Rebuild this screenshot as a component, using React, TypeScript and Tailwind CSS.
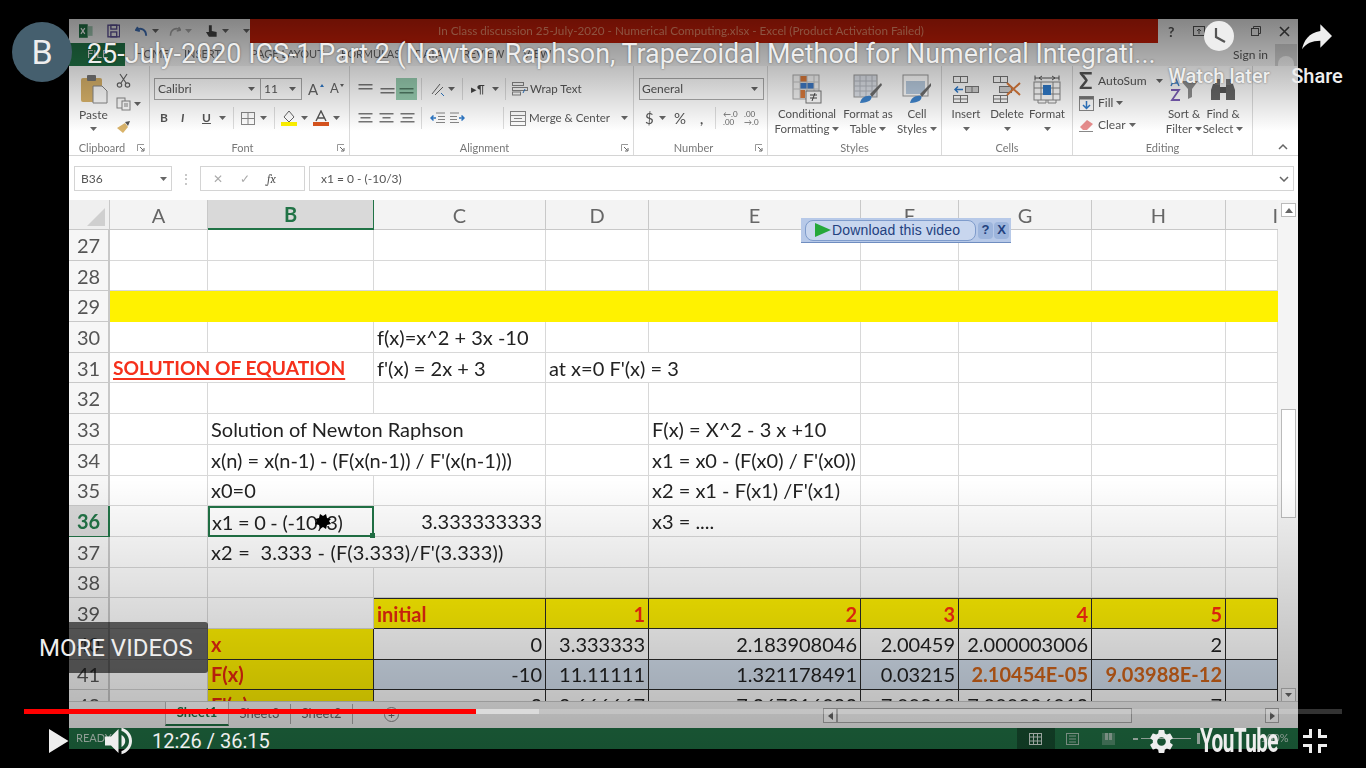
import React, { FC, ReactNode } from "react";
import { MdSettings } from "react-icons/md";

const excelFont = { fontFamily: "Lato, 'Open Sans', sans-serif" };

const Caret: FC<{ className?: string }> = ({ className = "" }) => (
  <svg width="7" height="4" viewBox="0 0 7 4" className={`shrink-0 ${className}`}>
    <path d="M0 0h7L3.5 4z" fill="#666" />
  </svg>
);

const Launcher = () => (
  <svg width="8" height="8" viewBox="0 0 8 8" className="shrink-0">
    <path d="M0.5 7V0.5H7" stroke="#999" fill="none" />
    <path d="M3 3l3.5 3.5M7 4v3H4" stroke="#666" fill="none" />
  </svg>
);

const Lines: FC<{ widths: number[]; color?: string }> = ({ widths, color = "#777" }) => (
  <svg width="15" height="12" viewBox="0 0 15 12" className="shrink-0">
    {widths.map((w, i) => (
      <rect key={i} x={(15 - w) / 2} y={i * 4 + 1} width={w} height="1.5" fill={color} />
    ))}
  </svg>
);

const Indent: FC<{ flip?: boolean }> = ({ flip }) => (
  <svg width="15" height="12" viewBox="0 0 15 12" className={`shrink-0 ${flip ? "-scale-x-100" : ""}`}>
    <path d="M6 1h9M8 4.500h7M8 7.500h7M6 10.500h9" stroke="#888" strokeWidth="1.200" />
    <path d="M6 6H1M3.500 3.500L1 6l2.500 2.500" stroke="#2f79c8" strokeWidth="1.500" fill="none" />
  </svg>
);

const Sep = () => <div className="w-px h-[22px] bg-[#dcdcdc] shrink-0" />;

const GroupLabel: FC<{ label: string; launcher?: boolean; pad?: string }> = ({ label, launcher, pad = "" }) => (
  <div className={`relative h-[18px] pt-[2px] flex items-center justify-center text-[11px] text-[#777] shrink-0 ${pad}`}>
    <span>{label}</span>
    {launcher && (
      <span className="absolute right-[4px] top-[6px]">
        <Launcher />
      </span>
    )}
  </div>
);

const Group: FC<{ w: string; label: string; launcher?: boolean; children: ReactNode; labelPad?: string }> = ({
  w,
  label,
  launcher,
  children,
  labelPad = "",
}) => (
  <div className={`${w} h-full flex flex-col border-r border-[#dadada] shrink-0`}>
    <div className="h-[72px] shrink-0 flex">{children}</div>
    <GroupLabel label={label} launcher={launcher} pad={labelPad} />
  </div>
);

const LargeBtn: FC<{ w: string; icon: ReactNode; lines: ReactNode[] }> = ({ w, icon, lines }) => (
  <div className={`${w} shrink-0 flex flex-col items-center pt-[8px]`}>
    <div className="h-[30px] flex items-center justify-center">{icon}</div>
    <div className="h-[2px]" />
    {lines.map((l, i) => (
      <div key={i} className="h-[15px] flex items-center gap-[3px] whitespace-nowrap text-[11.5px] leading-none text-[#555]">
        {l}
      </div>
    ))}
  </div>
);

const CondIcon = () => (
  <svg width="30" height="30" viewBox="0 0 30 30">
    <rect x="1" y="1" width="26" height="24" fill="#f4f4f4" stroke="#aaa" />
    <rect x="8" y="2" width="7" height="6" fill="#d9793a" />
    <rect x="8" y="9" width="14" height="6" fill="#3d78c4" />
    <rect x="8" y="16" width="5" height="8" fill="#d9793a" />
    <path d="M8 1v24M15 1v24M22 1v24M1 8h26M1 15h26" stroke="#c4c4c4" fill="none" />
    <rect x="14" y="17" width="15" height="12" fill="#fff" stroke="#777" />
    <path d="M18 21h7M18 24h7M23 19l-3 8" stroke="#444" fill="none" />
  </svg>
);

const TableIcon = () => (
  <svg width="30" height="30" viewBox="0 0 30 30">
    <rect x="1" y="1" width="23" height="22" fill="#dfe3ea" stroke="#999" />
    <path d="M1 7h23M1 12h23M1 17h23M7 1v22M13 1v22M19 1v22" stroke="#b4b8c0" fill="none" />
    <path d="M28 9L17 20l2 3 10-12z" fill="#6d6d6d" />
    <path d="M7 29c1-5 5-8 11-7 2 3-2 7-11 7z" fill="#3f84cc" />
  </svg>
);

const CellStyleIcon = () => (
  <svg width="30" height="30" viewBox="0 0 30 30">
    <rect x="1" y="1" width="25" height="21" fill="#fff" stroke="#999" />
    <rect x="4" y="7" width="19" height="13" fill="#b9cce0" />
    <path d="M29 9L18 20l2 3 9-11z" fill="#6d6d6d" />
    <path d="M8 29c1-5 5-8 11-7 2 3-2 7-11 7z" fill="#3f84cc" />
  </svg>
);

const InsertIcon = () => (
  <svg width="28" height="28" viewBox="0 0 28 28" fill="none" stroke="#777">
    <rect x="1.5" y="1.5" width="14" height="6" />
    <path d="M8.5 1.5v6" />
    <rect x="13.5" y="11.5" width="13" height="6" fill="#d0d0d0" />
    <path d="M20 11.5v6" />
    <path d="M11 14.5H3M6 11.5l-3 3 3 3" stroke="#2f79c8" strokeWidth="1.5" />
    <rect x="1.5" y="20.5" width="14" height="7" />
    <path d="M8.5 20.5v7M1.5 24h14" />
  </svg>
);

const DeleteIcon = () => (
  <svg width="30" height="28" viewBox="0 0 30 28" fill="none" stroke="#777">
    <rect x="1.5" y="1.5" width="14" height="6" />
    <path d="M8.5 1.5v6" />
    <rect x="7.5" y="11.5" width="12" height="6" fill="#d0d0d0" />
    <rect x="1.5" y="20.5" width="14" height="7" />
    <path d="M8.5 20.5v7M1.5 24h14" />
    <path d="M15 8l13 12M28 8L15 20" stroke="#d9793a" strokeWidth="2" />
  </svg>
);

const FormatIcon = () => (
  <svg width="30" height="30" viewBox="0 0 30 30" fill="none" stroke="#888">
    <path d="M3 4h24M3 1.5v5M27 1.5v5M10 2l-3 2 3 2M20 2l3 2-3 2" stroke="#555" />
    <rect x="2" y="8" width="26" height="18" />
    <path d="M9 8v18M21 8v18M2 14h26M2 20h26" />
    <rect x="11" y="11" width="8" height="10" fill="#2f79c8" stroke="none" />
    <path d="M6 26v3h8v-3M16 26v3h8v-3" stroke="#888" />
  </svg>
);

const SortIcon = () => (
  <svg width="30" height="26" viewBox="0 0 30 26">
    <path d="M2 10L6 1l4 9M3.5 7h5" fill="none" stroke="#3f84cc" strokeWidth="1.5" />
    <path d="M2 14h8L3 24h8" fill="none" stroke="#7a5cb5" strokeWidth="1.8" />
    <path d="M12 5h17l-6 8v8l-4 2V13z" fill="#8f8f8f" />
  </svg>
);

const BinocularIcon = () => (
  <svg width="26" height="26" viewBox="0 0 26 26">
    <path d="M3 8h7v16H1V14zM16 8h7l2 6v10h-9z" fill="#666" />
    <rect x="10" y="11" width="6" height="6" fill="#555" />
    <rect x="5" y="3" width="5" height="6" fill="#777" />
    <rect x="16" y="3" width="5" height="6" fill="#777" />
  </svg>
);

const PasteIcon = () => (
  <svg width="28" height="30" viewBox="0 0 28 30">
    <rect x="1" y="4" width="21" height="24" rx="2" fill="#d9b36a" />
    <rect x="7" y="1" width="9" height="6" rx="1" fill="#777" />
    <path d="M13 12h9l5 5v12H13z" fill="#fff" stroke="#888" />
  </svg>
);

const Ribbon = () => (
  <div className="h-[90px] bg-white flex border-b border-[#d4d4d4] shrink-0">
    <Group w="w-[81px]" label="Clipboard" launcher labelPad="pr-[14px]">
      <div className="w-[46px] flex flex-col items-center pt-[8px] pl-[3px]">
        <PasteIcon />
        <div className="text-[12px] text-[#555] mt-[3px] leading-[15px]">Paste</div>
        <Caret className="mt-[5px]" />
      </div>
      <div className="flex flex-col gap-[9px] pt-[7px] pl-[1px]">
        <svg width="15" height="15" viewBox="0 0 15 15" fill="none" stroke="#666" strokeWidth="1.2">
          <circle cx="3.5" cy="12" r="2.2" />
          <circle cx="11.5" cy="12" r="2.2" />
          <path d="M5 10L11 1M10 10L4 1" />
        </svg>
        <div className="flex items-center gap-[3px]">
          <svg width="15" height="14" viewBox="0 0 15 14" fill="#fff" stroke="#888">
            <rect x="1" y="1" width="8" height="10" />
            <rect x="6" y="4" width="8" height="9" />
            <path d="M8 7h4M8 9h4" />
          </svg>
          <Caret />
        </div>
        <svg width="15" height="14" viewBox="0 0 15 14">
          <path d="M9 2l5-1-2 5z" fill="#555" />
          <path d="M1 8l8-5 3 4-5 6z" fill="#d9b36a" />
        </svg>
      </div>
    </Group>

    <Group w="w-[200px]" label="Font" launcher labelPad="pr-[14px]">
      <div className="flex flex-col pt-[12px] pl-[4px] gap-[7px]">
        <div className="h-[22px] flex items-center">
          <div className="w-[107px] h-[22px] border border-[#ababab] flex items-center justify-between pl-[3px] pr-[5px] text-[12px] text-[#555]">
            Calibri
            <Caret />
          </div>
          <div className="w-[41px] h-[22px] border border-l-0 border-[#ababab] flex items-center justify-between pl-[3px] pr-[5px] text-[12px] text-[#555]">
            11
            <Caret />
          </div>
          <span className="ml-[6px] text-[15px] text-[#666] w-[12px]">A</span>
          <svg width="4" height="3" viewBox="0 0 4 3" className="self-start mt-[6px] mr-[6px]">
            <path d="M0 3h4L2 0z" fill="#2f79c8" />
          </svg>
          <span className="text-[13px] text-[#666] w-[10px]">A</span>
          <svg width="4" height="3" viewBox="0 0 4 3" className="self-start mt-[6px]">
            <path d="M0 0h4L2 3z" fill="#666" />
          </svg>
        </div>
        <div className="h-[22px] flex items-center text-[12px] text-[#555]">
          <span className="font-bold ml-[6px] w-[21px]">B</span>
          <span className="italic w-[21px] font-bold">I</span>
          <span className="underline w-[17px] font-bold">U</span>
          <Caret className="mr-[7px]" />
          <Sep />
          <svg width="14" height="13" viewBox="0 0 14 13" fill="none" stroke="#888" className="ml-[7px] mr-[5px]">
            <rect x="0.5" y="0.5" width="13" height="12" />
            <path d="M7 0v13M0 6.5h14" />
          </svg>
          <Caret className="mr-[7px]" />
          <Sep />
          <svg width="16" height="16" viewBox="0 0 16 16" className="ml-[6px] mr-[4px]">
            <path d="M8 1l5 6-5 5-5-5z" fill="#fff" stroke="#666" />
            <rect x="0" y="12" width="16" height="4" fill="#fff200" />
          </svg>
          <Caret className="mr-[5px]" />
          <svg width="16" height="16" viewBox="0 0 16 16" className="mr-[4px]">
            <path d="M3 11L8 1l5 10M5 8h6" fill="none" stroke="#555" strokeWidth="1.4" />
            <rect x="0" y="12" width="16" height="4" fill="#d9541e" />
          </svg>
          <Caret />
        </div>
      </div>
    </Group>

    <Group w="w-[284px]" label="Alignment" launcher labelPad="pr-[14px]">
      <div className="flex flex-col pt-[12px] pl-[8px] gap-[7px]">
        <div className="h-[22px] flex items-center">
          <span className="w-[21px]"><Lines widths={[14, 14]} /></span>
          <span className="w-[17px] pl-[1px]"><Lines widths={[0, 14, 14]} /></span>
          <span className="w-[21px] h-[22px] bg-[#97cdb0] flex items-center justify-center"><Lines widths={[0, 14, 14]} color="#4f7a63" /></span>
          <span className="w-[4px]" />
          <Sep />
          <svg width="15" height="15" viewBox="0 0 15 15" fill="none" stroke="#666" className="ml-[8px] mr-[3px]">
            <path d="M2 12L10 2M5 13l8-8" />
            <path d="M11 11l3 3" stroke="#2f79c8" />
          </svg>
          <Caret className="mr-[7px]" />
          <Sep />
          <span className="ml-[8px] mr-[5px] text-[11px] text-[#444] w-[16px]">▸¶</span>
          <Caret className="mr-[6px]" />
          <Sep />
          <svg width="16" height="14" viewBox="0 0 16 14" fill="none" stroke="#888" className="ml-[6px] mr-[2px]">
            <rect x="0.5" y="0.5" width="11" height="3" />
            <rect x="0.5" y="5.5" width="15" height="3" />
            <rect x="0.5" y="10" width="8" height="3" />
            <path d="M13 7l-2 4" stroke="#2f79c8" />
          </svg>
          <span className="text-[11.5px] text-[#555] whitespace-nowrap">Wrap Text</span>
        </div>
        <div className="h-[22px] flex items-center">
          <span className="w-[21px]"><Lines widths={[14, 10, 14]} /></span>
          <span className="w-[21px]"><Lines widths={[14, 8, 14]} /></span>
          <span className="w-[17px]"><Lines widths={[14, 10, 14]} /></span>
          <span className="w-[4px]" />
          <Sep />
          <span className="ml-[8px] w-[20px]"><Indent /></span>
          <span className="w-[31px]"><Indent flip /></span>
          <span className="w-[22px]" />
          <Sep />
          <svg width="16" height="15" viewBox="0 0 16 15" fill="none" stroke="#888" className="ml-[6px] mr-[3px]">
            <rect x="0.5" y="0.5" width="15" height="14" />
            <path d="M0 4.5h16M0 10.5h16M4 7.5h8" />
          </svg>
          <span className="text-[11.5px] text-[#555] whitespace-nowrap mr-[11px]">Merge & Center</span>
          <Caret />
        </div>
      </div>
    </Group>

    <Group w="w-[134px]" label="Number" launcher labelPad="pr-[14px]">
      <div className="flex flex-col pt-[12px] pl-[5px] gap-[7px]">
        <div className="w-[125px] h-[22px] border border-[#ababab] flex items-center justify-between pl-[2px] pr-[5px] text-[12px] text-[#555]">
          General
          <Caret />
        </div>
        <div className="h-[22px] flex items-center text-[#555]">
          <span className="ml-[6px] w-[14px] text-[15px]">$</span>
          <Caret className="mr-[8px]" />
          <span className="w-[26px] text-[15px]">%</span>
          <span className="w-[15px] text-[14px] font-bold">,</span>
          <Sep />
          <span className="ml-[7px] w-[21px] text-[8px] leading-[8px] text-[#666]">←.0<br />.00</span>
          <span className="text-[8px] leading-[8px] text-[#666]">.00<br />→.0</span>
        </div>
      </div>
    </Group>

    <Group w="w-[174px]" label="Styles">
      <span className="w-[9px]" />
      <LargeBtn w="w-[60px]" icon={<CondIcon />} lines={["Conditional", <>Formatting <Caret /></>]} />
      <LargeBtn w="w-[62px]" icon={<TableIcon />} lines={["Format as", <>Table <Caret /></>]} />
      <LargeBtn w="w-[36px]" icon={<CellStyleIcon />} lines={["Cell", <>Styles <Caret /></>]} />
    </Group>

    <Group w="w-[131px]" label="Cells">
      <span className="w-[4px]" />
      <LargeBtn w="w-[40px]" icon={<InsertIcon />} lines={["Insert", <Caret />]} />
      <LargeBtn w="w-[42px]" icon={<DeleteIcon />} lines={["Delete", <Caret />]} />
      <LargeBtn w="w-[38px]" icon={<FormatIcon />} lines={["Format", <Caret />]} />
    </Group>

    <Group w="w-[180px]" label="Editing">
      <div className="w-[92px] pl-[6px] pt-[5px] flex flex-col gap-[2px] text-[12px] text-[#555]">
        <div className="h-[20px] flex items-center">
          <span className="w-[19px] text-[22px] font-bold leading-none text-[#555]">Σ</span>
          <span className="mr-[9px]">AutoSum</span>
          <Caret />
        </div>
        <div className="h-[20px] flex items-center">
          <svg width="15" height="15" viewBox="0 0 15 15" className="mr-[4px]">
            <rect x="0.5" y="0.5" width="14" height="14" fill="#fff" stroke="#888" />
            <rect x="0.5" y="0.5" width="14" height="3" fill="#777" />
            <path d="M7.5 5v7M4 9l3.5 3.5L11 9" stroke="#2f79c8" strokeWidth="1.5" fill="none" />
          </svg>
          <span className="mr-[3px]">Fill</span>
          <Caret />
        </div>
        <div className="h-[20px] flex items-center">
          <svg width="15" height="13" viewBox="0 0 15 13" className="mr-[4px]">
            <path d="M1 8l7-7 6 4-6 6H4z" fill="#e88d8d" />
            <path d="M0 12.5h14" stroke="#888" />
          </svg>
          <span className="mr-[3px]">Clear</span>
          <Caret />
        </div>
      </div>
      <LargeBtn w="w-[38px]" icon={<SortIcon />} lines={["Sort &", <>Filter <Caret /></>]} />
      <LargeBtn w="w-[40px]" icon={<BinocularIcon />} lines={["Find &", <>Select <Caret /></>]} />
    </Group>

    <div className="flex-1 flex items-end justify-end pr-[10px] pb-[5px]">
      <svg width="10" height="7" viewBox="0 0 10 7" fill="none" stroke="#666" strokeWidth="1.5">
        <path d="M1 6l4-4 4 4" />
      </svg>
    </div>
  </div>
);

const TitleBar = () => (
  <div className="h-[24px] flex bg-[#f2f2f2] shrink-0">
    <div className="w-[181px] flex items-center pl-[10px]">
      <svg width="14" height="14" viewBox="0 0 14 14" className="mr-[14px]">
        <rect width="9" height="14" fill="#217346" />
        <path d="M2 4l4 6M6 4l-4 6" stroke="#fff" strokeWidth="1.2" />
        <rect x="9" y="2" width="5" height="10" fill="#9fc7b1" />
      </svg>
      <svg width="14" height="14" viewBox="0 0 14 14" className="mr-[15px]" fill="none" stroke="#5a4e93" strokeWidth="1.4">
        <rect x="1" y="1" width="12" height="12" />
        <rect x="4" y="1" width="6" height="4" />
        <rect x="4" y="8" width="6" height="5" />
      </svg>
      <svg width="13" height="12" viewBox="0 0 13 12" className="mr-[4px]" fill="none" stroke="#3f6fb5" strokeWidth="2">
        <path d="M3 2L1 5l4 1M1.5 5c4-3 10-1 10 6" />
      </svg>
      <Caret className="mr-[10px]" />
      <svg width="13" height="12" viewBox="0 0 13 12" className="mr-[4px]" fill="none" stroke="#a8a8a8" strokeWidth="1.6">
        <path d="M10 2l2 3-4 1M11.5 5c-4-3-10-1-10 6" />
      </svg>
      <Caret className="mr-[13px] opacity-50" />
      <svg width="13" height="14" viewBox="0 0 13 14" className="mr-[4px]">
        <path d="M4 1h3v6l5 1v5H4L1 8h3z" fill="#444" />
      </svg>
      <Caret className="mr-[14px]" />
      <Caret />
    </div>
    <div className="w-[908px] bg-[#c41e08] flex items-center justify-center text-[11.7px] text-[#e98a6b] pb-[1px] pr-[46px]">
      In Class discussion 25-July-2020 - Numerical Computing.xlsx -  Excel (Product Activation Failed)
    </div>
    <div className="flex-1 flex items-center text-[#555] pl-[10px] text-[14px] font-bold">
      <span className="w-[25px]">?</span>
      <svg width="12" height="10" viewBox="0 0 12 10" fill="none" stroke="#555" className="mr-[46px]">
        <rect x="0.5" y="0.5" width="11" height="9" />
        <path d="M6 8V3M4 5l2-2 2 2" />
      </svg>
      <svg width="10" height="10" viewBox="0 0 10 10" fill="none" stroke="#555" className="mr-[18px]">
        <rect x="0.5" y="2.5" width="7" height="7" />
        <path d="M2.5 2.5v-2h7v7h-2" />
      </svg>
      <svg width="11" height="11" viewBox="0 0 11 11" stroke="#444" strokeWidth="1.6">
        <path d="M1 1l9 9M10 1l-9 9" />
      </svg>
    </div>
  </div>
);

const TabsRow = () => (
  <div className="h-[23px] flex items-center bg-[#f2f2f2] text-[11px] text-[#666] shrink-0">
    <div className="w-[56px] h-full bg-[#217346] text-[#ddd] flex items-center pl-[18px]">FILE</div>
    <span className="ml-[10px] w-[38px]">HOME</span>
    <span className="ml-[11px] w-[45px]">INSERT</span>
    <span className="ml-[22px] w-[80px] whitespace-nowrap">PAGE LAYOUT</span>
    <span className="ml-[10px] w-[62px]">FORMULAS</span>
    <span className="ml-[12px] w-[36px]">DATA</span>
    <span className="ml-[12px] w-[48px]">REVIEW</span>
    <span className="ml-[12px]">VIEW</span>
    <div className="ml-auto flex items-center pr-[1px]">
      <span className="text-[12px] text-[#555] mr-[7px]">Sign in</span>
      <div className="w-[22px] h-[22px] bg-[#cfcfcf] flex items-end justify-center overflow-hidden">
        <div className="w-[16px] h-[10px] bg-[#f2f2f2] rounded-t-full" />
      </div>
    </div>
  </div>
);

const FormulaBar = () => (
  <div className="h-[44px] bg-white flex items-start pt-[10px] pl-[5px] text-[12px] text-[#555] shrink-0">
    <div className="w-[98px] h-[25px] border border-[#d4d4d4] flex items-center justify-between pl-[6px] pr-[4px]">
      B36
      <Caret />
    </div>
    <div className="w-[28px] h-[25px] flex items-center justify-center text-[#aaa]">⋮</div>
    <div className="w-[105px] h-[25px] border border-[#d4d4d4] flex items-center gap-[17px] pl-[12px] text-[#aaa]">
      <span>✕</span>
      <span>✓</span>
      <span className="italic font-serif text-[#555]">fx</span>
    </div>
    <div className="ml-[4px] w-[985px] h-[25px] border border-[#d4d4d4] flex items-center justify-between pl-[11px] pr-[4px]">
      x1 = 0 - (-10/3)
      <svg width="10" height="6" viewBox="0 0 10 6" fill="none" stroke="#666" strokeWidth="1.5">
        <path d="M1 1l4 4 4-4" />
      </svg>
    </div>
  </div>
);

type Cell = { t?: string; span?: number; cls?: string; sel?: boolean };
type Row = { n: number; fill?: string; bold?: boolean; cells: Cell[] };

const gridCell = "border-r border-b border-[#d8d8d8]";
const tblCell = "border-r border-b border-[#2a2a2a]";
const blank = (count: number): Cell[] => Array.from({ length: count }, () => ({ cls: gridCell }));
const num = (t: string, extra = ""): Cell => ({ t, cls: `${tblCell} justify-end ${extra}` });
const hdr = (t: string): Cell => num(t, "bg-[#fff000] text-[#ff2a10] font-bold border-t");
const side = (t: string): Cell => ({ t, cls: `${tblCell} bg-[#fff000] text-[#e8280f] font-bold` });
const blue = (t: string, orange = false): Cell =>
  num(t, `bg-[#d6e2f0] ${orange ? "text-[#d0641a] font-bold" : ""}`);

const rows: Row[] = [
  { n: 27, cells: blank(9) },
  { n: 28, cells: blank(9) },
  { n: 29, cells: Array.from({ length: 9 }, () => ({ cls: "bg-[#fff200]" })) },
  { n: 30, cells: [...blank(2), { t: "f(x)=x^2 + 3x -10", cls: gridCell }, ...blank(6)] },
  {
    n: 31,
    cells: [
      {
        t: "SOLUTION OF EQUATION",
        span: 2,
        cls: `${gridCell} text-[19.2px] text-[#f5301c] font-bold underline decoration-2 underline-offset-3 [text-decoration-skip-ink:none]`,
      },
      { t: "f'(x) = 2x + 3", cls: gridCell },
      { t: "at x=0 F'(x) = 3", span: 2, cls: gridCell },
      ...blank(4),
    ],
  },
  { n: 32, cells: blank(9) },
  {
    n: 33,
    cells: [...blank(1), { t: "Solution of Newton Raphson", span: 2, cls: gridCell }, ...blank(1), { t: "F(x) = X^2 - 3 x +10", cls: gridCell }, ...blank(4)],
  },
  {
    n: 34,
    cells: [...blank(1), { t: "x(n) = x(n-1) - (F(x(n-1)) / F'(x(n-1)))", span: 2, cls: gridCell }, ...blank(1), { t: "x1 = x0 - (F(x0) / F'(x0))", cls: gridCell }, ...blank(4)],
  },
  {
    n: 35,
    cells: [...blank(1), { t: "x0=0", cls: gridCell }, ...blank(2), { t: "x2 = x1 - F(x1) /F'(x1)", cls: gridCell }, ...blank(4)],
  },
  {
    n: 36,
    bold: true,
    cells: [
      ...blank(1),
      { t: "x1 = 0 - (-10/3)", sel: true },
      { t: "3.333333333", cls: `${gridCell} justify-end` },
      ...blank(1),
      { t: "x3 = ....", cls: gridCell },
      ...blank(4),
    ],
  },
  {
    n: 37,
    cells: [...blank(1), { t: "x2 = \u00a03.333 - (F(3.333)/F'(3.333))", span: 2, cls: `${gridCell} tracking-[0.15px]` }, ...blank(6)],
  },
  { n: 38, cells: blank(9) },
  {
    n: 39,
    cells: [
      ...blank(2),
      { t: "initial", cls: `${tblCell} border-t bg-[#fff000] text-[#e8280f] font-bold` },
      hdr("1"),
      hdr("2"),
      hdr("3"),
      hdr("4"),
      hdr("5"),
      hdr(""),
    ],
  },
  {
    n: 40,
    cells: [...blank(1), side("x"), num("0"), num("3.333333"), num("2.183908046"), num("2.00459"), num("2.000003006"), num("2"), num("")],
  },
  {
    n: 41,
    cells: [
      ...blank(1),
      side("F(x)"),
      blue("-10"),
      blue("11.11111"),
      blue("1.321178491"),
      blue("0.03215"),
      blue("2.10454E-05", true),
      blue("9.03988E-12", true),
      blue(""),
    ],
  },
  {
    n: 42,
    cells: [...blank(1), side("F'(x)"), num("3"), num("9.666667"), num("7.367816092"), num("7.00918"), num("7.000006012"), num("7"), num("")],
  },
];

const columns = ["A", "B", "C", "D", "E", "F", "G", "H", "I"];
const sheetCols = "grid-cols-[41px_98px_166px_172px_103px_212px_98px_133px_134px_52px]";

const Sheet = () => (
  <div className="h-[501px] flex overflow-hidden bg-white shrink-0">
    <div className={`w-[1209px] grid ${sheetCols} grid-rows-[30px] auto-rows-[30.7px] text-[20px] text-[#222] leading-none`}>
      <div className="bg-[#efefef] border-r border-b border-[#c8c8c8] flex items-end justify-end pr-[4px] pb-[3px]">
        <svg width="18" height="18" viewBox="0 0 18 18">
          <path d="M18 0v18H0z" fill="#cfcfcf" />
        </svg>
      </div>
      {columns.map((c) => (
        <div
          key={c}
          className={
            c === "B"
              ? "bg-[#d9d9d9] border-r border-b-2 border-[#217346] flex items-center justify-center font-bold text-[#217346]"
              : c === "I"
                ? "bg-[#f3f3f3] border-b border-[#c8c8c8] flex items-center justify-end text-[#666]"
                : "bg-[#f3f3f3] border-r border-b border-[#c8c8c8] flex items-center justify-center text-[#666]"
          }
        >
          {c}
        </div>
      ))}
      {rows.map((r) => (
        <React.Fragment key={r.n}>
          <div
            className={
              r.bold
                ? "bg-[#d9d9d9] border-r-2 border-b border-[#217346] flex items-center justify-center font-bold text-[#217346]"
                : "bg-[#f6f6f6] border-r-2 border-b border-[#c8c8c8] flex items-center justify-center text-[#555]"
            }
          >
            {r.n}
          </div>
          {r.cells.map((c, i) =>
            c.sel ? (
              <div key={i} className="relative border-2 border-[#217346] flex items-center pl-[2px] whitespace-nowrap tracking-[-0.25px]">
                {c.t}
                <svg width="20" height="20" viewBox="0 0 20 20" className="absolute left-[103px] top-[3px]">
                  <path d="M7 3l3 2 3-2 1 4 4 1-2 2 2 3-4 1-1 4-3-2-3 2-1-4-4-1 2-3-2-2 4-1z" fill="#000" />
                </svg>
                <span className="absolute -right-[3px] -bottom-[3px] w-[5px] h-[5px] bg-[#217346]" />
              </div>
            ) : (
              <div
                key={i}
                className={`flex items-center px-[3px] whitespace-nowrap ${c.cls ?? ""} ${
                  c.span === 2 ? "col-span-2" : ""
                }`}
              >
                {c.t}
              </div>
            ),
          )}
        </React.Fragment>
      ))}
    </div>
    <div className="flex-1 flex flex-col pl-[3px] pr-[2px] pt-[3px] bg-[#f4f4f4]">
      <div className="h-[14px] border border-[#bbb] bg-white flex items-center justify-center shrink-0">
        <svg width="8" height="5" viewBox="0 0 8 5"><path d="M4 0l4 5H0z" fill="#666" /></svg>
      </div>
      <div className="h-[192px] shrink-0" />
      <div className="h-[109px] border border-[#bbb] bg-white shrink-0" />
      <div className="flex-1" />
      <div className="h-[14px] border border-[#bbb] bg-white flex items-center justify-center shrink-0 mb-[-1px]">
        <Caret />
      </div>
    </div>
  </div>
);

const SheetTabs = () => (
  <div className="h-[27px] bg-[#f4f4f4] flex items-start text-[13px] text-[#666] border-t border-[#ccc] shrink-0">
    <div className="w-[96px]" />
    <div className="w-[64px] h-[24px] bg-white border-x border-b-2 border-x-[#bbb] border-b-[#217346] font-bold text-[#217346] flex items-center justify-center">
      Sheet1
    </div>
    <div className="w-[62px] h-[20px] border-r border-[#aaa] flex items-center justify-center mt-[2px]">Sheet3</div>
    <div className="w-[62px] h-[20px] border-r border-[#aaa] flex items-center justify-center mt-[2px]">Sheet2</div>
    <div className="w-[46px] flex justify-end mt-[5px]">
      <span className="w-[15px] h-[15px] rounded-full border border-[#888] flex items-center justify-center text-[12px] leading-none">+</span>
    </div>
    <div className="w-[424px]" />
    <div className="w-[14px] h-[15px] border border-[#aaa] bg-white flex items-center justify-center mt-[6px]">
      <svg width="5" height="8" viewBox="0 0 5 8"><path d="M5 0v8L0 4z" fill="#666" /></svg>
    </div>
    <div className="w-[295px] h-[15px] border border-[#aaa] bg-[#fafafa] mt-[6px]" />
    <div className="w-[133px]" />
    <div className="w-[14px] h-[15px] border border-[#aaa] bg-white flex items-center justify-center mt-[6px]">
      <svg width="5" height="8" viewBox="0 0 5 8"><path d="M0 0v8l5-4z" fill="#666" /></svg>
    </div>
  </div>
);

const StatusBar = () => (
  <div className="h-[21px] bg-[#217346] flex items-center text-[11px] text-[#c8dcd0] pl-[7px] shrink-0">
    <span>READY</span>
    <div className="ml-[905px] w-[38px] h-full bg-[#174f31] flex items-center justify-center">
      <svg width="13" height="12" viewBox="0 0 13 12" fill="none" stroke="#d8e6de">
        <rect x="0.5" y="0.5" width="12" height="11" />
        <path d="M4.5 0v12M8.5 0v12M0 4h13M0 8h13" />
      </svg>
    </div>
    <svg width="13" height="12" viewBox="0 0 13 12" fill="none" stroke="#a8c4b4" className="ml-[11px]">
      <rect x="0.5" y="0.5" width="12" height="11" />
      <path d="M3 3h7M3 6h7M3 9h7" />
    </svg>
    <svg width="13" height="12" viewBox="0 0 13 12" fill="#a8c4b4" className="ml-[23px]">
      <rect x="0" y="0" width="13" height="12" fillOpacity="0.4" />
      <rect x="3" y="0" width="3" height="7" />
      <rect x="7" y="0" width="3" height="7" />
    </svg>
    <span className="ml-[18px] w-[5px] h-[2px] bg-[#c8dcd0]" />
    <span className="ml-[3px] w-[50px] h-[1px] bg-[#c8dcd0]" />
    <span className="ml-[6px] w-[3px] h-[11px] bg-[#c8dcd0]" />
    <span className="ml-[61px]">100%</span>
  </div>
);

const Overlays = () => (
  <>
    {/* video player shading */}
    <div className="absolute left-[69px] top-[19px] w-[1229px] h-[112px] bg-gradient-to-b from-black/45 to-transparent" />
    <div className="absolute left-[69px] top-[479px] w-[1229px] h-[270px] bg-gradient-to-t from-black/30 to-transparent" />

    {/* channel avatar */}
    <div className="absolute left-[12px] top-[22px] w-[60px] h-[60px] rounded-full bg-[#455f6e] flex items-center justify-center text-[34px] text-[#eee]">
      B
    </div>

    <div className="absolute left-[87px] top-[36px] w-[1075px] text-[26.9px] leading-[36px] text-[#eee] whitespace-nowrap [text-shadow:0_0_2px_rgba(0,0,0,.5)]">
      25-July-2020 ICS-1 Part 2 (Newton Raphson, Trapezoidal Method for Numerical Integrati...
    </div>

    {/* watch later and share */}
    <div className="absolute left-[1159px] top-[21px] w-[120px] flex flex-col items-center">
      <div className="w-[30px] h-[30px] rounded-full bg-[#eee] flex items-center justify-center">
        <svg width="30" height="30" viewBox="0 0 30 30" fill="none" stroke="#555" strokeWidth="2.2">
          <path d="M12 7v9l9 5" />
        </svg>
      </div>
      <span className="mt-[13px] text-[20px] leading-[24px] font-medium text-[#eee] whitespace-nowrap [text-shadow:0_0_2px_rgba(0,0,0,.5)]">
        Watch later
      </span>
    </div>
    <div className="absolute left-[1287px] top-[16px] w-[60px] flex flex-col items-center">
      <svg width="40" height="40" viewBox="0 0 24 24">
        <path d="M14 9V5l7 7-7 7v-4.1C9 14.9 5.500 16.500 3 20c1-5 4-10 11-11z" fill="#eee" />
      </svg>
      <span className="mt-[8px] text-[20px] leading-[24px] font-medium text-[#eee]">Share</span>
    </div>

    {/* download plugin bar */}
    <div className="absolute left-[801px] top-[218px] w-[210px] h-[25px] bg-[#b7c9e8] border-b border-[#6f8dc0] flex items-center pl-[4px] [font-family:'Liberation_Sans',sans-serif]">
      <div className="w-[171px] h-[21px] rounded-[8px] border border-[#7f9ccc] bg-[#c8d6ee] flex items-center pl-[9px] text-[14px] font-medium tracking-[0.15px] text-[#23417e] whitespace-nowrap">
        <svg width="16" height="14" viewBox="0 0 16 14" className="mr-[1px]">
          <path d="M0 0l16 7-16 7z" fill="#25a83a" />
        </svg>
        Download this video
      </div>
      <span className="ml-[2px] w-[15px] h-[17px] rounded-[4px] bg-[#9db5dc] text-[13px] font-bold text-[#23417e] flex items-center justify-center">?</span>
      <span className="ml-[1px] w-[15px] h-[17px] rounded-[4px] bg-[#9db5dc] text-[13px] font-bold text-[#23417e] flex items-center justify-center">X</span>
    </div>

    {/* more videos */}
    <div className="absolute left-[24px] top-[622px] w-[184px] h-[51px] rounded-r-[3px] bg-black/60 flex items-center pl-[15px] text-[24px] text-[#eee]">
      MORE VIDEOS
    </div>

    {/* progress */}
    <div className="absolute left-[24px] top-[709px] w-[1318px] h-[5px] flex bg-white/20">
      <div className="w-[452px] bg-[#ff0000]" />
      <div className="w-[63px] bg-white/40" />
    </div>

    {/* controls */}
    <div className="absolute left-[31px] top-[714px] w-[1311px] h-[54px] flex items-center text-[#eee]">
      <svg width="54" height="54" viewBox="0 0 36 36" className="shrink-0">
        <path d="M12 26l6.500-4V14L12 10zM18.500 22L25 18l-6.500-4z" fill="#eee" />
      </svg>
      <span className="w-[8px]" />
      <svg width="54" height="54" viewBox="0 0 36 36" className="shrink-0">
        <path
          d="M8 21h4l5 5V10l-5 5H8zM19 14v8c1.480-.68 2.500-2.230 2.500-4 0-1.740-1.020-3.260-2.500-4zM19 11.290c2.890.86 5 3.540 5 6.710s-2.110 5.850-5 6.710v2.060c4.010-.91 7-4.490 7-8.770s-2.990-7.860-7-8.770z"
          fill="#eee"
        />
      </svg>
      <span className="ml-[5px] text-[20px] text-[#eee] whitespace-nowrap">12:26 / 36:15</span>
      <span className="flex-1" />
      <div className="w-[54px] h-[54px] flex items-center justify-center shrink-0">
        <MdSettings size={29} color="#eee" />
      </div>
      <div className="w-[100px] h-[54px] overflow-visible flex items-center pl-[12px] shrink-0">
        <span className="origin-left scale-x-[0.63] text-[33px] font-bold tracking-[-1px] text-[#eee] whitespace-nowrap">
          YouTube
        </span>
      </div>
      <svg width="54" height="54" viewBox="0 0 36 36" className="shrink-0">
        <path
          d="M14 14h-4v2h6v-6h-2zM22 14v-4h-2v6h6v-2zM20 26h2v-4h4v-2h-6zM10 22h4v4h2v-6h-6z"
          fill="#eee"
        />
      </svg>
    </div>
  </>
);

const App: FC = () => {
  return (
    <div className="relative w-[1366px] h-[768px] bg-black overflow-hidden [font-family:Roboto,sans-serif]">
      <div className="pl-[69px] pt-[19px]">
        <div className="w-[1229px] h-[730px] flex flex-col overflow-hidden blur-[0.4px]" style={excelFont}>
          <TitleBar />
          <TabsRow />
          <Ribbon />
          <FormulaBar />
          <Sheet />
          <SheetTabs />
          <StatusBar />
        </div>
      </div>
      <Overlays />
    </div>
  );
};

export default App;
